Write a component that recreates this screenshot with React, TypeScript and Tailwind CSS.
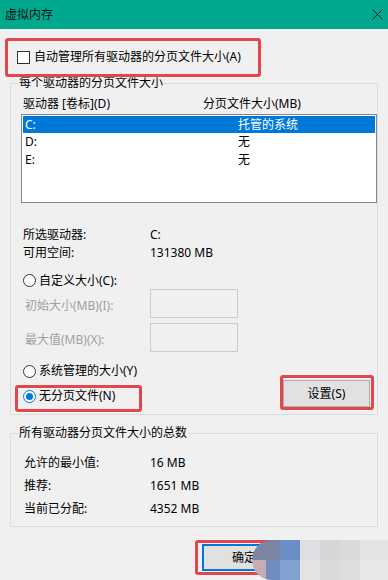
import React from "react";

const font = { fontFamily: '"Noto Sans", "Noto Sans CJK SC", sans-serif' };

function Radio({ checked }: { checked?: boolean }) {
  return (
    <span
      className={`flex h-[13px] w-[13px] shrink-0 items-center justify-center rounded-full border bg-white ${
        checked ? "border-[#0078d7]" : "border-[#333333]"
      }`}
    >
      {checked && <span className="h-[7px] w-[7px] rounded-full bg-[#0078d7]" />}
    </span>
  );
}

function RedBox({ className }: { className: string }) {
  return (
    <div
      className={`pointer-events-none absolute rounded-[3px] border-[3px] border-[#e2474d] shadow-[0_0_2px_rgba(255,255,255,0.9)] ${className}`}
    />
  );
}

export default function App() {
  return (
    <div
      className="relative h-[580px] w-[388px] overflow-hidden bg-[#f0f0f0] text-[12px] text-black"
      style={font}
    >
      {/* Title bar */}
      <div className="flex h-[29px] items-center justify-between bg-[#00a98e] pl-[5px] pr-[5px]">
        <span className="text-[12px] leading-[16px] text-[#111]">虚拟内存</span>
        <svg width="11" height="11" viewBox="0 0 11 11" className="mr-[0px]">
          <path d="M0.5 0.5 L10.5 10.5 M10.5 0.5 L0.5 10.5" stroke="#1a1a1a" strokeWidth="1" />
        </svg>
      </div>

      <div className="px-[10px]">
        {/* Auto manage checkbox */}
        <div className="mt-[20px] flex h-[16px] items-center pl-[7px]">
          <span className="h-[13px] w-[13px] shrink-0 border border-[#333333] bg-white" />
          <span className="ml-[4px] leading-[16px]">自动管理所有驱动器的分页文件大小(A)</span>
        </div>

        {/* Group 1 */}
        <div className="relative mt-[18px] border border-[#dcdcdc]">
          <span className="absolute left-[8px] top-[-9px] bg-[#f0f0f0] leading-[16px]">
            每个驱动器的分页文件大小
          </span>
          <div className="flex h-[16px] items-center pl-[12px] pt-0 mt-[12px] leading-[16px]">
            <span className="w-[180px]">驱动器 [卷标](D)</span>
            <span>分页文件大小(MB)</span>
          </div>
          <div className="ml-[10px] mt-[2px] h-[89px] border border-[#828790] bg-white px-[1px] pt-[1px]">
            <div className="flex h-[17px] items-center bg-[#0078d7] pl-[2px] leading-[16px] text-white">
              <span className="w-[213px]">C:</span>
              <span>托管的系统</span>
            </div>
            <div className="flex h-[18px] items-center pl-[2px] leading-[16px]">
              <span className="w-[213px]">D:</span>
              <span>无</span>
            </div>
            <div className="flex h-[18px] items-center pl-[2px] leading-[16px]">
              <span className="w-[213px]">E:</span>
              <span>无</span>
            </div>
          </div>

          <div className="mt-[23px] pl-[12px]">
            <div className="flex h-[18px] items-center leading-[16px]">
              <span className="w-[127px]">所选驱动器:</span>
              <span>C:</span>
            </div>
            <div className="flex h-[18px] items-center leading-[16px]">
              <span className="w-[127px]">可用空间:</span>
              <span>131380 MB</span>
            </div>
            <div className="mt-[10px] flex h-[17px] items-center leading-[16px]">
              <Radio />
              <span className="ml-[3px]">自定义大小(C):</span>
            </div>
            <div className="flex h-[29px] items-center text-[#a0a0a0]">
              <span className="w-[127px] pl-[2px] pt-[5px] leading-[16px]">初始大小(MB)(I):</span>
              <span className="h-[29px] w-[88px] border border-[#cccccc] bg-[#f0f0f0]" />
            </div>
            <div className="mt-[5px] flex h-[29px] items-center text-[#a0a0a0]">
              <span className="w-[127px] pl-[2px] pt-[5px] leading-[16px]">最大值(MB)(X):</span>
              <span className="h-[29px] w-[88px] border border-[#cccccc] bg-[#f0f0f0]" />
            </div>
            <div className="mt-[10px] flex h-[18px] items-center leading-[16px]">
              <Radio />
              <span className="ml-[3px]">系统管理的大小(Y)</span>
            </div>
            <div className="flex h-[27px] items-start justify-between pr-[7px]">
              <div className="mt-[7px] flex h-[18px] items-center leading-[16px]">
                <Radio checked />
                <span className="ml-[3px]">无分页文件(N)</span>
              </div>
              <button className="flex h-[27px] w-[87px] items-center justify-center border border-[#adadad] bg-[#e1e1e1] leading-[16px]">
                设置(S)
              </button>
            </div>
          </div>
          <div className="h-[7px]" />
        </div>

        {/* Group 2 */}
        <div className="relative mt-[18px] border border-[#dcdcdc]">
          <span className="absolute left-[8px] top-[-9px] bg-[#f0f0f0] pr-[1px] leading-[16px]">
            所有驱动器分页文件大小的总数
          </span>
          <div className="pl-[13px] pt-[17px] pb-[6px]">
            <div className="flex h-[23px] items-center leading-[16px]">
              <span className="w-[126px]">允许的最小值:</span>
              <span>16 MB</span>
            </div>
            <div className="flex h-[23px] items-center leading-[16px]">
              <span className="w-[126px]">推荐:</span>
              <span>1651 MB</span>
            </div>
            <div className="flex h-[23px] items-center leading-[16px]">
              <span className="w-[126px]">当前已分配:</span>
              <span>4352 MB</span>
            </div>
          </div>
        </div>

        {/* Buttons */}
        <div className="mt-[17px] flex pl-[192px]">
          <button className="flex h-[27px] w-[87px] items-center justify-center border-2 border-[#0078d7] bg-[#e1e1e1] leading-[16px]">
            确定
          </button>
          <button className="ml-[8px] flex h-[27px] w-[87px] items-center justify-center border border-[#adadad] bg-[#e1e1e1] leading-[16px]">
            取消
          </button>
        </div>
      </div>

      {/* Annotation overlays */}
      <RedBox className="left-[5px] top-[38px] h-[39px] w-[256px]" />
      <RedBox className="left-[15px] top-[385px] h-[27px] w-[127px]" />
      <RedBox className="left-[280px] top-[375px] h-[35px] w-[94px]" />
      <RedBox className="left-[195px] top-[540px] h-[35px] w-[100px]" />

      {/* Mosaic blur */}
      <div className="absolute left-[252px] top-[540px] flex h-[40px] w-[136px] overflow-hidden rounded-l-[22px]">
        <div className="flex w-[28px] flex-col">
          <div className="h-[20px] bg-[#7b84a3]" />
          <div className="flex h-[20px]">
            <div className="w-[14px] bg-[#c7acb8]" />
            <div className="w-[14px] bg-[#6f8cbf]" />
          </div>
        </div>
        <div className="flex w-[20px] flex-col">
          <div className="h-[20px] bg-[#6b8ec6]" />
          <div className="h-[20px] bg-[#80a2d1]" />
        </div>
        <div className="flex w-[20px] flex-col">
          <div className="h-[20px] bg-[#dedfe2]" />
          <div className="h-[20px] bg-[#e3e3e5]" />
        </div>
        <div className="flex w-[20px] flex-col">
          <div className="h-[20px] bg-[#d6d6d6]" />
          <div className="h-[20px] bg-[#d9d9d9]" />
        </div>
        <div className="flex w-[20px] flex-col">
          <div className="h-[20px] bg-[#dadada]" />
          <div className="h-[20px] bg-[#dddddd]" />
        </div>
        <div className="flex flex-1 flex-col">
          <div className="h-[20px] bg-[#e4e4e4]" />
          <div className="h-[20px] bg-[#e7e7e7]" />
        </div>
      </div>
    </div>
  );
}
